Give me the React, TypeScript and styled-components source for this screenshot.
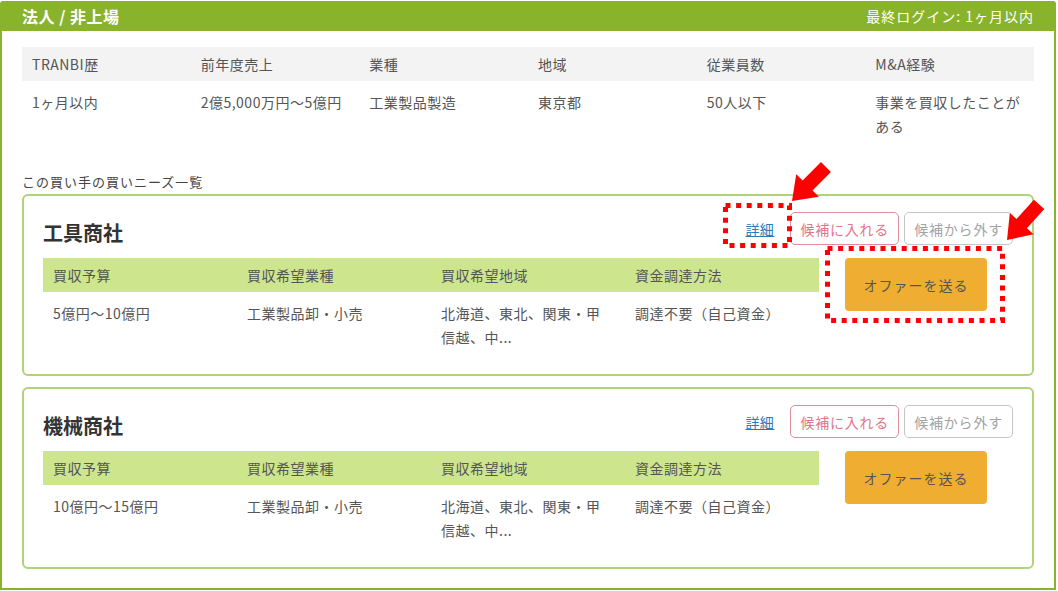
import React from 'react';
import styled, { createGlobalStyle } from 'styled-components';

const GlobalStyle = createGlobalStyle`
  * { box-sizing: border-box; }
  html, body { margin: 0; padding: 0; background: #fff; }
  body {
    font-family: "Noto Sans CJK JP", "Noto Sans", sans-serif;
    color: #555;
    font-size: 14px;
    letter-spacing: 0.5px;
  }
`;

const Panel = styled.section`
  width: 1056px;
  margin-top: 1px;
  border: 2px solid #8ab32c;
  border-top: none;
  border-radius: 3px 3px 0 0;
  padding-bottom: 19px;
`;

const Header = styled.header`
  height: 30px;
  background: #8ab32c;
  display: flex;
  align-items: center;
  justify-content: space-between;
  padding: 0 20px;
  color: #fff;
`;

const HeaderTitle = styled.h1`
  margin: 0;
  font-size: 16px;
  font-weight: 700;
  letter-spacing: 0.5px;
`;

const HeaderMeta = styled.span`
  font-size: 14px;
  letter-spacing: 1px;
`;

const Body = styled.div`
  padding: 16px 20px 0;
`;

const InfoTable = styled.div`
  display: grid;
  grid-template-columns: repeat(6, 1fr);
`;

const InfoHead = styled.div`
  background: #f3f3f3;
  height: 34px;
  display: flex;
  align-items: center;
  padding: 0 10px;
`;

const InfoCell = styled.div`
  padding: 9px 10px;
  line-height: 24px;
`;

const SectionLabel = styled.h2`
  margin: 25px 0 2px;
  font-size: 13px;
  font-weight: 400;
  line-height: 20px;
  letter-spacing: 1px;
  color: #444;
`;

const CardList = styled.div`
  display: flex;
  flex-direction: column;
  gap: 11px;
`;

const Card = styled.article`
  position: relative;
  border: 2px solid #afd377;
  border-radius: 6px;
  padding: 16px 19px;
`;

const TitleRow = styled.div`
  display: flex;
  justify-content: space-between;
  align-items: flex-start;
`;

const CardTitle = styled.h3`
  margin: 7px 0 0;
  font-size: 20px;
  font-weight: 700;
  line-height: 28px;
  color: #333;
  letter-spacing: 0;
`;

const Actions = styled.div`
  display: flex;
  align-items: center;
`;

const DetailLink = styled.a`
  color: #2c7bb6;
  text-decoration: underline;
  margin-right: 16px;
  font-size: 14px;
`;

const OutlineButton = styled.button<{ $tone: 'pink' | 'gray' }>`
  height: 33px;
  padding: 0 9px;
  margin-left: ${(p) => (p.$tone === 'gray' ? '5px' : '0')};
  background: #fff;
  border: 1.5px solid ${(p) => (p.$tone === 'pink' ? '#e28e9c' : '#c4c4c4')};
  color: ${(p) => (p.$tone === 'pink' ? '#e07788' : '#a3a3a3')};
  border-radius: 5px;
  font-family: inherit;
  font-size: 14px;
  letter-spacing: 0.8px;
`;

const CardBody = styled.div`
  margin-top: 11px;
  display: grid;
  grid-template-columns: 4fr 1fr;
`;

const NeedsTable = styled.div`
  display: grid;
  grid-template-columns: repeat(4, 1fr);
`;

const NeedsHead = styled.div`
  background: #cde68e;
  height: 34px;
  display: flex;
  align-items: center;
  padding: 0 10px;
`;

const NeedsCell = styled.div`
  padding: 9px 14px 9px 10px;
  line-height: 24px;
`;

const OfferColumn = styled.div`
  display: flex;
  justify-content: center;
  align-items: flex-start;
`;

const OfferButton = styled.button`
  width: 142px;
  height: 53px;
  background: #efae31;
  border: none;
  border-radius: 4px;
  color: #555;
  font-family: inherit;
  font-size: 14px;
  letter-spacing: 1px;
`;

const Overlay = styled.svg`
  position: absolute;
  left: -2px;
  top: -2px;
  width: 1040px;
  height: 190px;
  overflow: visible;
  pointer-events: none;
`;

const ARROW = '0,0 22,-16 22,-7 48,-7 48,7 22,7 22,16';

const info = [
  ['TRANBI歴', '1ヶ月以内'],
  ['前年度売上', '2億5,000万円〜5億円'],
  ['業種', '工業製品製造'],
  ['地域', '東京都'],
  ['従業員数', '50人以下'],
  ['M&A経験', '事業を買収したことがある'],
];

const needHeads = ['買収予算', '買収希望業種', '買収希望地域', '資金調達方法'];

const cards = [
  { title: '工具商社', values: ['5億円〜10億円', '工業製品卸・小売', '北海道、東北、関東・甲信越、中...', '調達不要（自己資金）'], marked: true },
  { title: '機械商社', values: ['10億円〜15億円', '工業製品卸・小売', '北海道、東北、関東・甲信越、中...', '調達不要（自己資金）'], marked: false },
];

export default function App() {
  return (
    <>
      <GlobalStyle />
      <Panel>
        <Header>
          <HeaderTitle>法人 / 非上場</HeaderTitle>
          <HeaderMeta>最終ログイン: 1ヶ月以内</HeaderMeta>
        </Header>
        <Body>
          <InfoTable>
            {info.map(([h]) => (
              <InfoHead key={h}>{h}</InfoHead>
            ))}
            {info.map(([h, v]) => (
              <InfoCell key={h}>{v}</InfoCell>
            ))}
          </InfoTable>
          <SectionLabel>この買い手の買いニーズ一覧</SectionLabel>
          <CardList>
            {cards.map((c) => (
              <Card key={c.title}>
                <TitleRow>
                  <CardTitle>{c.title}</CardTitle>
                  <Actions>
                    <DetailLink href="#">詳細</DetailLink>
                    <OutlineButton $tone="pink">候補に入れる</OutlineButton>
                    <OutlineButton $tone="gray">候補から外す</OutlineButton>
                  </Actions>
                </TitleRow>
                <CardBody>
                  <NeedsTable>
                    {needHeads.map((h) => (
                      <NeedsHead key={h}>{h}</NeedsHead>
                    ))}
                    {c.values.map((v, i) => (
                      <NeedsCell key={i}>{v}</NeedsCell>
                    ))}
                  </NeedsTable>
                  <OfferColumn>
                    <OfferButton>オファーを送る</OfferButton>
                  </OfferColumn>
                </CardBody>
                {c.marked && (
                  <Overlay>
                    <rect x={703.5} y={11.5} width={64} height={40} fill="none" stroke="#ff0000" strokeWidth={5} strokeDasharray="5 5.6" />
                    <rect x={805.5} y={54.5} width={175} height={72} fill="none" stroke="#ff0000" strokeWidth={5} strokeDasharray="5 5.6" />
                    <g transform="translate(770 7) rotate(-45)">
                      <polygon points={ARROW} fill="#ff0000" />
                    </g>
                    <g transform="translate(985 46) rotate(-48)">
                      <polygon points={ARROW} fill="#ff0000" />
                    </g>
                  </Overlay>
                )}
              </Card>
            ))}
          </CardList>
        </Body>
      </Panel>
    </>
  );
}
